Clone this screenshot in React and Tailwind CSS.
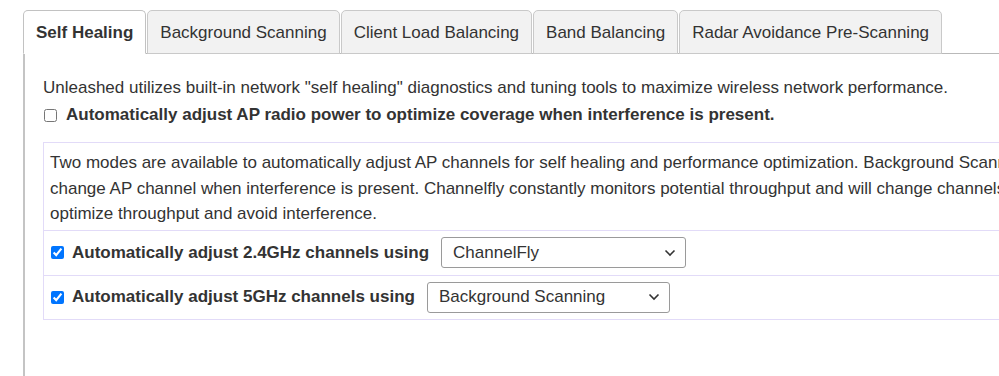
import { useState } from "react";

const tabs = [
  "Self Healing",
  "Background Scanning",
  "Client Load Balancing",
  "Band Balancing",
  "Radar Avoidance Pre-Scanning",
];

function Chevron() {
  return (
    <svg
      className="pointer-events-none absolute right-[10px] top-1/2 -translate-y-1/2"
      width="12"
      height="8"
      viewBox="0 0 12 8"
      fill="none"
    >
      <path d="M1.5 1.5 L6 6 L10.5 1.5" stroke="#333" strokeWidth="1.6" />
    </svg>
  );
}

function Select({ value, options, width }) {
  const [val, setVal] = useState(value);
  return (
    <div className={`relative font-normal ${width}`}>
      <select
        value={val}
        onChange={(e) => setVal(e.target.value)}
        className="w-full h-[31px] appearance-none rounded-[3px] border border-[#9a9a9a] bg-white pl-[11px] pr-8 text-[17px] font-normal text-[#333] outline-none"
      >
        {options.map((o) => (
          <option key={o}>{o}</option>
        ))}
      </select>
      <Chevron />
    </div>
  );
}

export default function App() {
  const [active, setActive] = useState(0);
  const [power, setPower] = useState(false);
  const [ch24, setCh24] = useState(true);
  const [ch5, setCh5] = useState(true);

  return (
    <div
      className="w-[999px] h-[376px] overflow-hidden bg-white text-[#333] pt-[10px]"
      style={{ fontFamily: '"Liberation Sans", Arial, sans-serif' }}
    >
      {/* TABS */}
      <ul className="flex ml-[23px] border-b border-[#b9b9b9]">
        {tabs.map((t, i) => (
          <li
            key={t}
            onClick={() => setActive(i)}
            className={`-mb-px mr-px cursor-pointer rounded-t-[5px] border px-[12px] pt-[10px] pb-[8px] text-[17px] leading-[24px] ${
              active === i
                ? "border-[#c2c2c2] border-b-white bg-white font-bold"
                : "border-[#c9c9c9] bg-[#f2f2f2]"
            }`}
          >
            {t}
          </li>
        ))}
      </ul>

      {/* PANEL */}
      <div className="ml-[23px] h-[400px] border-l-2 border-[#c4c4c4] pl-[18px] pt-[21px] text-[17px]">
        <p className="leading-[26px] whitespace-nowrap">
          Unleashed utilizes built-in network "self healing" diagnostics and
          tuning tools to maximize wireless network performance.
        </p>
        <label className="flex items-center h-[28px] font-bold whitespace-nowrap">
          <input
            type="checkbox"
            checked={power}
            onChange={(e) => setPower(e.target.checked)}
            className="ml-[1px] mr-[9px] h-[13px] w-[13px]"
          />
          Automatically adjust AP radio power to optimize coverage when
          interference is present.
        </label>

        <div className="mt-[13px] w-[1100px] border border-[#e2dbf8]">
          <p className="px-[6px] pt-[7px] pb-[3px] leading-[25.5px] whitespace-nowrap">
            Two modes are available to automatically adjust AP channels for
            self healing and performance optimization. Background Scanning will
            <br />
            change AP channel when interference is present. Channelfly
            constantly monitors potential throughput and will change channels
            to
            <br />
            optimize throughput and avoid interference.
          </p>
          <div className="flex items-center h-[45px] border-t border-[#e2dbf8] pl-[7px] font-bold whitespace-nowrap">
            <input
              type="checkbox"
              checked={ch24}
              onChange={(e) => setCh24(e.target.checked)}
              className="mr-[8px] h-[13px] w-[13px]"
            />
            <span className="mr-[12px]">
              Automatically adjust 2.4GHz channels using
            </span>
            <Select
              value="ChannelFly"
              options={["ChannelFly", "Background Scanning"]}
              width="w-[245px]"
            />
          </div>
          <div className="flex items-center h-[44px] border-t border-[#e2dbf8] pl-[7px] font-bold whitespace-nowrap">
            <input
              type="checkbox"
              checked={ch5}
              onChange={(e) => setCh5(e.target.checked)}
              className="mr-[8px] h-[13px] w-[13px]"
            />
            <span className="mr-[12px]">
              Automatically adjust 5GHz channels using
            </span>
            <Select
              value="Background Scanning"
              options={["ChannelFly", "Background Scanning"]}
              width="w-[243px]"
            />
          </div>
        </div>
      </div>
    </div>
  );
}
